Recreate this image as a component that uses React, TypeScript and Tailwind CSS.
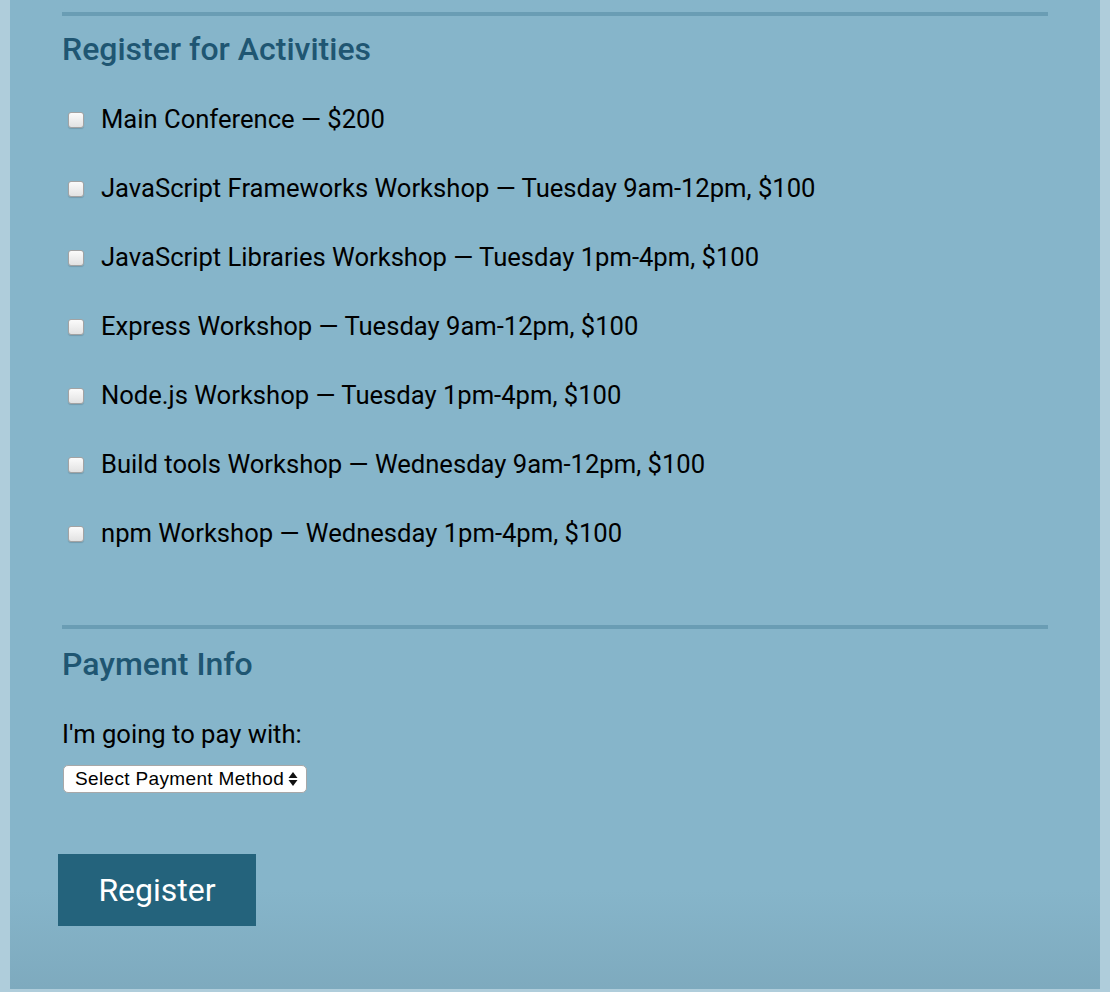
import React from "react";

const activities = [
  "Main Conference — $200",
  "JavaScript Frameworks Workshop — Tuesday 9am-12pm, $100",
  "JavaScript Libraries Workshop — Tuesday 1pm-4pm, $100",
  "Express Workshop — Tuesday 9am-12pm, $100",
  "Node.js Workshop — Tuesday 1pm-4pm, $100",
  "Build tools Workshop — Wednesday 9am-12pm, $100",
  "npm Workshop — Wednesday 1pm-4pm, $100",
];

const Checkbox = () => (
  <span className="ml-[6px] mr-[17px] w-[16px] h-[16px] rounded-[3px] border border-[#a3a3a3] bg-gradient-to-b from-[#fbfbfb] to-[#e2e2e2] shadow-[0_1px_1px_rgba(0,0,0,0.15)] shrink-0" />
);

const App = () => {
  return (
    <div className="min-h-[992px] w-[1110px] bg-[#afcddb] pb-[3px] font-['Roboto',sans-serif]">
      <div className="mx-[10px] h-[989px] bg-gradient-to-b from-[#86b5ca] from-90% to-[#7eaabe] px-[52px] pt-[12px]">
        <div className="h-[4px] bg-[#6a9db4]" />
        <h2 className="mt-[15px] leading-[36px] text-[32px] font-medium text-[#1f5672]">Register for Activities</h2>
        <div className="mt-[18px] flex flex-col">
          {activities.map((a) => (
            <label key={a} className="flex items-center h-[69px] text-[25.6px] text-black">
              <Checkbox />
              <span>{a}</span>
            </label>
          ))}
        </div>
        <div className="mt-[57px] h-[4px] bg-[#6a9db4]" />
        <h2 className="mt-[17px] leading-[36px] text-[32px] font-medium text-[#1f5672]">Payment Info</h2>
        <p className="mt-[34px] leading-[36px] text-[25.6px] text-black">I'm going to pay with:</p>
        <div className="mt-[13px] ml-[1px] flex items-center justify-between w-[244px] h-[28px] rounded-[5px] border border-[#a8a8a8] bg-white pl-[11px] pr-[8px] font-['Liberation_Sans',sans-serif] text-[19px] tracking-[0.35px] text-black">
          <span>Select Payment Method</span>
          <svg width="10" height="16" viewBox="0 0 10 16">
            <path d="M5 1 L9.5 7 L0.5 7 Z" fill="#111" />
            <path d="M5 15 L9.5 9 L0.5 9 Z" fill="#111" />
          </svg>
        </div>
        <button className="mt-[61px] -ml-[4px] w-[198px] h-[72px] bg-[#24637c] text-white text-[32px] leading-none">
          Register
        </button>
      </div>
    </div>
  );
};

export default App;
